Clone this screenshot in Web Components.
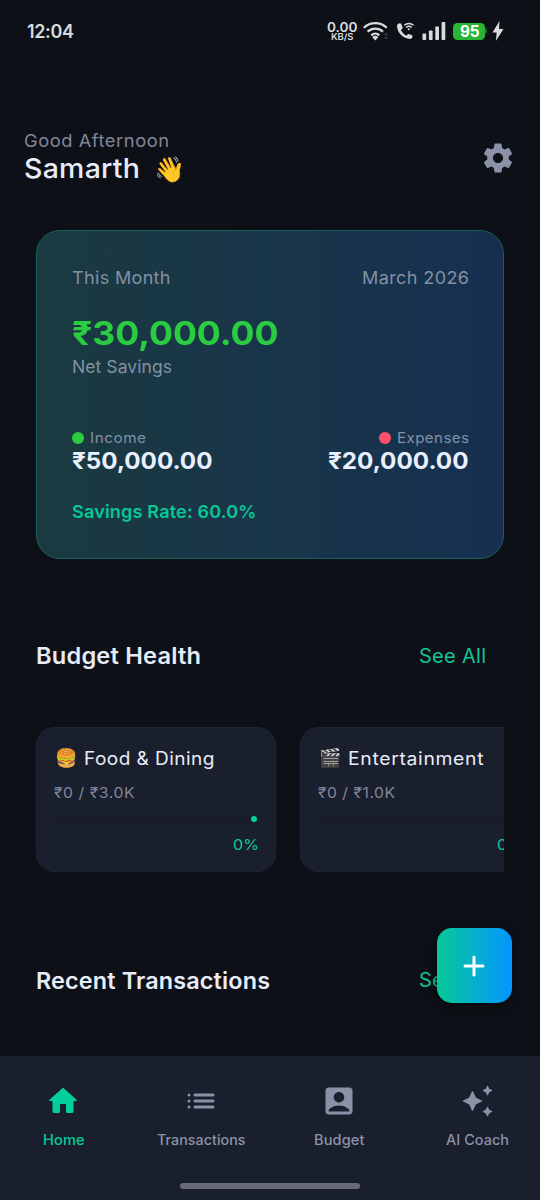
<!DOCTYPE html>
<html lang="en">
<head>
<meta charset="utf-8">
<title>Home</title>
<style>
html,body{margin:0;background:#0d1117}
body{width:540px;height:1200px;overflow:hidden;font-family:Inter,"Noto Sans",sans-serif}
</style>
</head>
<body>
<finance-app></finance-app>
<script>
const define = (name, html, Base = HTMLElement) => {
  const tpl = document.createElement('template');
  tpl.innerHTML = html;
  customElements.define(name, class extends Base {
    constructor() {
      super();
      this.attachShadow({ mode: 'open' }).append(tpl.content.cloneNode(true));
    }
  });
};

/* One line of text fitted to a given width, partly by tracking ("track" is its share)
   and partly by widening the glyphs. Its box height is set by "line". */
customElements.define('fit-text', class extends HTMLElement {
  connectedCallback() {
    if (this.shadowRoot) return;
    const a = n => this.getAttribute(n);
    const w = a('w') ? +a('w') + 1 : 0;
    this.attachShadow({ mode: 'open' }).innerHTML = `<style>
      :host{display:block;flex:none;width:${w ? w + 'px' : 'max-content'};white-space:pre;margin-right:-.5px;
        font-size:${a('size')}px;font-weight:${a('weight') || 400};line-height:${a('line') || 24}px;height:${a('line') || 24}px}
      span{display:inline-block;transform-origin:0 50%}</style><span><slot></slot></span>`;
    const s = this.shadowRoot.querySelector('span');
    const n = [...this.textContent].length;
    if (w) {
      const natural = s.getBoundingClientRect().width;
      const ls = (w - natural) * +(a('track') ?? .5) / (n - 1);
      s.style.letterSpacing = ls + 'px';
      s.style.marginRight = -ls + 'px';
      s.style.transform = `scaleX(${w / (natural + ls * (n - 1))})`;
    }
  }
});

const ICONS = {
  settings: '<path d="M19.14 12.94c.04-.3.06-.61.06-.94 0-.32-.02-.64-.07-.94l2.03-1.58c.18-.14.23-.41.12-.61l-1.92-3.32c-.12-.22-.37-.29-.59-.22l-2.39.96c-.5-.38-1.03-.7-1.62-.94l-.36-2.54c-.04-.24-.24-.41-.48-.41h-3.84c-.24 0-.43.17-.47.41l-.36 2.54c-.59.24-1.13.57-1.62.94l-2.39-.96c-.22-.08-.47 0-.59.22L2.74 8.87c-.12.21-.08.47.12.61l2.03 1.58c-.05.3-.09.63-.09.94s.02.64.07.94l-2.03 1.58c-.18.14-.23.41-.12.61l1.92 3.32c.12.22.37.29.59.22l2.39-.96c.5.38 1.03.7 1.62.94l.36 2.54c.05.24.24.41.48.41h3.84c.24 0 .44-.17.47-.41l.36-2.54c.59-.24 1.13-.56 1.62-.94l2.39.96c.22.08.47 0 .59-.22l1.92-3.32c.12-.22.07-.47-.12-.61l-2.01-1.58zM12 15.4c-1.880 0-3.400-1.520-3.400-3.400s1.520-3.400 3.400-3.400 3.400 1.520 3.400 3.400-1.520 3.400-3.400 3.400z"/>',
  home: '<path d="M10 19v-5h4v5c0 .55.45 1 1 1h3c.55 0 1-.45 1-1v-7h1.7c.46 0 .68-.57.33-.87L12.67 3.6c-.38-.34-.96-.34-1.34 0l-8.36 7.53c-.34.3-.13.87.33.87H5v7c0 .55.45 1 1 1h3c.55 0 1-.45 1-1z"/>',
  list: '<circle cx="4" cy="8" r="1"/><circle cx="4" cy="12" r="1"/><circle cx="4" cy="16" r="1"/><rect x="7" y="7" width="14" height="2" rx="1"/><rect x="7" y="11" width="14" height="2" rx="1"/><rect x="7" y="15" width="14" height="2" rx="1"/>',
  account: '<path fill-rule="evenodd" d="M19 3H5c-1.1 0-2 .9-2 2v14c0 1.1.9 2 2 2h14c1.1 0 2-.9 2-2V5c0-1.1-.9-2-2-2zM12 6c1.93 0 3.5 1.57 3.5 3.5S13.93 13 12 13s-3.5-1.57-3.5-3.5S10.07 6 12 6zm7 13H5v-.23c0-.62.28-1.2.76-1.58C7.47 15.82 9.64 15 12 15s4.53.82 6.24 2.19c.48.38.76.97.76 1.58V19z"/>',
  sparkle: '<g stroke="currentColor" stroke-width=".9" stroke-linejoin="round"><path d="M9 5.9l1.9 4.2L15.1 12l-4.2 1.9L9 18.1l-1.900-4.200L2.900 12l4.200-1.900z"/><path d="M19 2.300l.85 1.850L21.700 5l-1.850.85L19 7.700l-.85-1.850L16.300 5l1.850-.85zM19 16.300l.85 1.850L21.700 19l-1.850.85L19 21.700l-.85-1.850L16.300 19l1.850-.85z"/></g>'
};
customElements.define('ui-icon', class extends HTMLElement {
  connectedCallback() {
    if (this.shadowRoot) return;
    this.attachShadow({ mode: 'open' }).innerHTML =
      `<style>:host{display:block;width:36px;height:36px;flex:none}svg{display:block}</style>
       <svg width="36" height="36" viewBox="0 0 24 24" fill="currentColor">${ICONS[this.getAttribute('name')]}</svg>`;
  }
});

define('status-bar', `<style>
  :host{display:flex;height:62px;align-items:center;justify-content:space-between;padding:0 36px 0 26.5px;color:#d9dbdf;box-sizing:border-box}
  .r{display:flex;align-items:center;height:62px}
  .net{display:flex;flex-direction:column;align-items:center;width:30px;padding-top:2px}
  svg{display:block}
  .bat{width:32px;height:17px;border-radius:4.5px;background:#2bb535;color:#fff;display:flex;justify-content:center;align-items:center;margin-left:7px}
  .nub{width:2px;height:6px;border-radius:0 2px 2px 0;background:#22642d}
  </style>
  <fit-text size="18.5" weight="600" w="46">12:04</fit-text>
  <div class="r">
    <div class="net"><fit-text size="13" weight="600" line="11" w="29.5" track="0">0.00</fit-text><fit-text size="8.6" weight="600" line="9" w="21.5" track="0">KB/S</fit-text></div>
    <svg style="margin-left:6px" width="26" height="20" viewBox="0 0 26 20" fill="none" stroke="currentColor" stroke-width="2.3">
      <path d="M.8 6.8a16.5 16.5 0 0 1 23 0M4.6 10.7a11.2 11.2 0 0 1 15.4 0M8.300 14.300a5.800 5.800 0 0 1 8 0"/>
      <path d="M9.300 16.200a4 4 0 0 1 6 0L12.300 19.500z" fill="currentColor" stroke="none"/>
      <path d="M21.300 14.300l1.700-2.300 1.700 2.300zM21.300 16.200l1.700 2.300 1.700-2.300z" fill="#4d5157" stroke="none"/></svg>
    <svg style="margin-left:7px" width="18" height="18" viewBox="0 0 18 18" fill="currentColor">
      <path d="M3.900 1.200C2.200 1.300 1 2.500 1 4.100c.3 7 6.200 12.700 13 12.800 1.600 0 2.500-1.200 2.600-2.600 0-.5-.3-.9-.7-1.100l-3-1.200c-.4-.2-.9-.1-1.200.3l-1.200 1.500C8.100 12.400 6 10.300 5 7.900l1.400-1.300c.3-.3.4-.7.3-1.100L5.200 1.900c-.2-.5-.7-.8-1.300-.7z"/>
      <path d="M8.200 3.300a7 7 0 0 1 9.400 0M10.100 5.500a4.200 4.200 0 0 1 5.600 0" fill="none" stroke="currentColor" stroke-width="1.300"/><path d="M11.600 6.900a2 2 0 0 1 2.600 0l-1.300 1.500z"/></svg>
    <svg style="margin-left:8px" width="24" height="20" viewBox="0 0 24 20" fill="currentColor"><rect x=".5" y="12.500" width="3.700" height="6.500" rx=".8"/><rect x="6.900" y="9.500" width="3.700" height="9.500" rx=".8"/><rect x="13.300" y="5.500" width="3.700" height="13.500" rx=".8"/><rect x="19.600" y="1" width="3.700" height="18" rx=".8"/></svg>
    <div class="bat"><fit-text size="15.500" weight="700" line="17" w="18.500">95</fit-text></div><div class="nub"></div>
    <svg style="margin-left:5px" width="12" height="20" viewBox="0 0 12 20" fill="currentColor"><path d="M7.500 0L.500 11.500h4.200L3.800 20 11.500 8H7z"/></svg>
  </div>`);

define('greeting-header', `<style>
  :host{display:flex;justify-content:space-between;padding:66px 24px 0;height:168px;box-sizing:border-box;color:#e8ecf8}
  .hi{color:#80869a;margin-left:-.5px}.n{display:flex;align-items:center;height:32px;margin-top:-1px}
  ui-icon{color:#8b92a8;margin:12px 0 0}
  .e{margin-left:14.5px}
  </style>
  <div><fit-text class="hi" size="17.500" line="26" w="144">Good Afternoon</fit-text>
  <div class="n"><fit-text size="27" weight="500" line="32" w="115" track=".2">Samarth</fit-text><fit-text class="e" size="25" line="32">👋</fit-text></div></div>
  <ui-icon name="settings"></ui-icon>`);

define('amount-stat', `<style>
  :host{display:flex;flex-direction:column}
  :host([end]){align-items:flex-end}
  .l{display:flex;align-items:center;gap:5.5px;height:22px;color:#8490a3}
  i{width:12px;height:12px;border-radius:50%;background:var(--dot)}
  </style><div class="l"><i></i><slot name="label"></slot></div><slot name="value"></slot>`);

define('summary-card', `<style>
  :host{display:block;margin:0 36px;height:329px;box-sizing:border-box;padding:33px 35px 0;border:1.500px solid #17615f;border-radius:24px;background:linear-gradient(90deg,#1a3a40,#18354a 55%,#162f50) border-box;color:#e8f0ff}
  .row{display:flex;justify-content:space-between}
  .m{color:#8490a3}.net{color:#2bcb42;margin-top:23px}
  .ns{margin-top:3px}.stats{margin-top:47px}.rate{color:#06c996;margin-top:26px}
  </style>
  <div class="row m"><fit-text size="17.500" line="28" w="97.500">This Month</fit-text><fit-text size="17.500" line="28" w="106">March 2026</fit-text></div>
  <fit-text class="net" size="33" weight="700" line="36" w="205.500" track="0">₹30,000.00</fit-text>
  <fit-text class="m ns" size="17.500" line="26" w="99">Net Savings</fit-text>
  <div class="row stats">
    <amount-stat style="--dot:#2bcb42"><fit-text slot="label" size="14.500" line="22" w="55">Income</fit-text><fit-text slot="value" size="23" weight="700" line="25" w="139.500" track="0">₹50,000.00</fit-text></amount-stat>
    <amount-stat end style="--dot:#ff4f6b"><fit-text slot="label" size="14.500" line="22" w="71">Expenses</fit-text><fit-text slot="value" size="23" weight="700" line="25" w="139.500" track="0">₹20,000.00</fit-text></amount-stat>
  </div>
  <fit-text class="rate" size="17.800" weight="600" line="24" w="183.500">Savings Rate: 60.0%</fit-text>`);

define('section-head', `<style>
  :host{display:flex;justify-content:space-between;padding:0 54.5px 0 36px;height:30px;color:#e8ecf8}
  .a{color:#10c596}
  </style><slot></slot><fit-text class="a" size="19.500" line="31" w="66">See All</fit-text>`);

define('budget-card', `<style>
  :host{display:block;width:240px;height:145px;flex:none;box-sizing:border-box;border:1px solid #1e2433;border-radius:18px;background:#1a1f2e;padding:15px 17px 0;color:#e8ecf8}
  .t{display:flex;height:30px;gap:7.5px}.e{width:22px;flex:none;padding-left:.5px}
  .s{display:flex;height:22px;margin-top:9px;color:#80869a}
  .bar{height:8px;border-radius:4px;background:#171c28;margin-top:11px;display:flex;justify-content:flex-end;align-items:center;padding-right:1px}
  .bar i{width:6px;height:6px;border-radius:50%;background:#00ce9b}
  .p{display:flex;justify-content:flex-end;color:#0ac998;margin-top:10px}
  </style>
  <div class="t"><div class="e"><slot name="icon"></slot></div><slot name="title"></slot></div>
  <div class="s"><slot name="spent"></slot></div><div class="bar"><i></i></div>
  <div class="p"><fit-text size="15" line="23" w="25" track="0">0%</fit-text></div>`);

define('nav-item', `<style>
  :host{display:flex;flex-direction:column;align-items:center;width:126px;flex:none;color:#8b92a8}
  :host([active]){color:#03cf9c}
  slot[name=icon]{display:block;height:45px}
  </style><slot name="icon"></slot><slot></slot>`);

define('bottom-nav', `<style>
  :host{display:flex;flex-direction:column;align-items:center;width:540px;height:144px;background:#1a1f2e;margin-top:auto;flex:none}
  .r{display:flex;gap:12px;padding-top:27px;height:100px}
  .h{width:180px;height:6px;border-radius:3px;background:#666b76}
  </style>
  <div class="r">
  <nav-item active><ui-icon slot="icon" name="home"></ui-icon><fit-text size="14" weight="500" w="40.500" track=".2">Home</fit-text></nav-item>
  <nav-item><ui-icon slot="icon" name="list"></ui-icon><fit-text size="14" weight="500" w="87.500" track=".2">Transactions</fit-text></nav-item>
  <nav-item><ui-icon slot="icon" name="account"></ui-icon><fit-text size="14" weight="500" w="49.500" track=".2">Budget</fit-text></nav-item>
  <nav-item><ui-icon slot="icon" name="sparkle"></ui-icon><fit-text size="14" weight="500" w="62" track=".2">AI Coach</fit-text></nav-item>
  </div><div class="h"></div>`);

define('add-button', `<style>
  :host{display:grid;place-items:center;width:75px;height:75px;border-radius:15px;background:linear-gradient(90deg,#06c998,#0496ff);box-shadow:0 3px 9px #0008}
  </style><svg width="24" height="24" fill="none" stroke="#fff" stroke-width="3" stroke-linecap="round"><path d="M12 3v18M3 12h18"/></svg>`);

define('finance-app', `<style>
  :host{display:flex;flex-direction:column;width:540px;height:1200px;position:relative;overflow:hidden;background:#0d1117}
  .cards{display:flex;gap:24px;margin:57px 36px 0;overflow:hidden}
  add-button{position:absolute;right:28.500px;bottom:197px}
  </style>
  <status-bar></status-bar>
  <greeting-header></greeting-header>
  <summary-card></summary-card>
  <section-head style="margin-top:82px"><fit-text size="22.300" weight="600" line="30" w="164" track=".2">Budget Health</fit-text></section-head>
  <div class="cards" style="margin-top:56px">
    <budget-card><fit-text slot="icon" size="18" line="30">🍔</fit-text><fit-text slot="title" size="18.300" line="30" w="129.500">Food &amp; Dining</fit-text><fit-text slot="spent" size="14.800" line="22" w="79.500">₹0 / ₹3.0K</fit-text></budget-card>
    <budget-card><fit-text slot="icon" size="18" line="30">🎬</fit-text><fit-text slot="title" size="18.300" line="30" w="134.500">Entertainment</fit-text><fit-text slot="spent" size="14.800" line="22" w="76">₹0 / ₹1.0K</fit-text></budget-card>
  </div>
  <section-head style="margin-top:93px"><fit-text size="22.300" weight="600" line="31" w="233" track=".2">Recent Transactions</fit-text></section-head>
  <bottom-nav></bottom-nav>
  <add-button></add-button>`);
</script>
</body>
</html>
